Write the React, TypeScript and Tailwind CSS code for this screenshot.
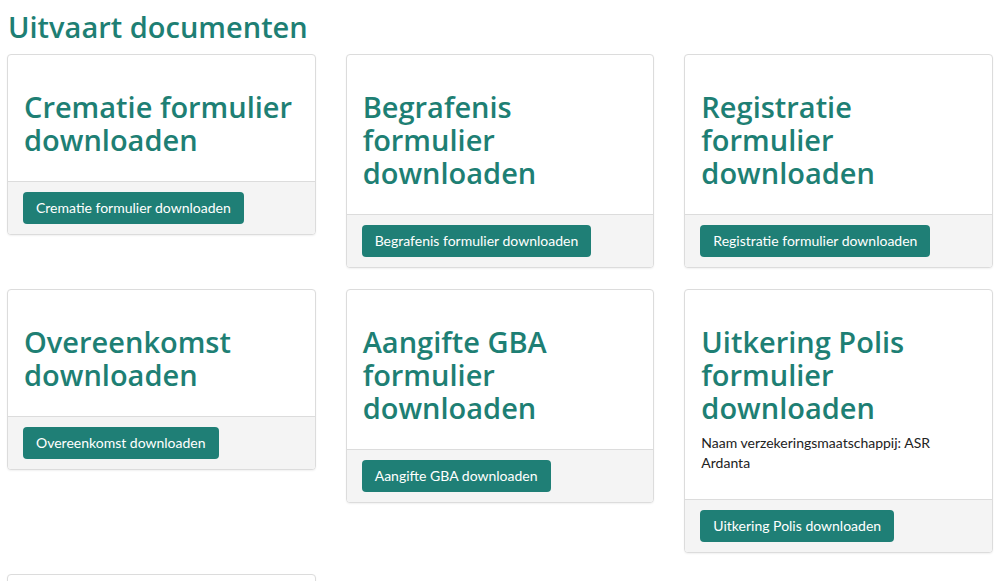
import React from 'react';

interface DocCard {
    title: string;
    button: string;
    note?: string;
}

const docs: DocCard[] = [
    { title: 'Crematie formulier downloaden', button: 'Crematie formulier downloaden' },
    { title: 'Begrafenis formulier downloaden', button: 'Begrafenis formulier downloaden' },
    { title: 'Registratie formulier downloaden', button: 'Registratie formulier downloaden' },
    { title: 'Overeenkomst downloaden', button: 'Overeenkomst downloaden' },
    { title: 'Aangifte GBA formulier downloaden', button: 'Aangifte GBA downloaden' },
    { title: 'Uitkering Polis formulier downloaden', button: 'Uitkering Polis downloaden', note: 'Naam verzekeringsmaatschappij: ASR Ardanta' },
    { title: 'Overlijdensakte downloaden', button: 'Overlijdensakte downloaden' },
];

const Card: React.FC<{ doc: DocCard }> = ({ doc }) => (
    <div className="self-start bg-white border border-[#dcdcdc] rounded-[4px] shadow-[0_1px_2px_rgba(0,0,0,0.06)] overflow-hidden">
        <div className="px-4 pt-[35px] pb-[25px]">
            <h3 className="font-['Open_Sans',sans-serif] font-semibold text-[29px] leading-[33px] text-[#1e7f74]">
                {doc.title}
            </h3>
            {doc.note && (
                <p className="mt-[9px] mb-px font-['Lato',sans-serif] text-[14px] leading-[20px] text-[#222] pr-10">{doc.note}</p>
            )}
        </div>
        <div className="bg-[#f4f4f4] border-t border-[#dcdcdc] px-[15px] py-[10px]">
            <button className="h-[32px] bg-[#1f7f76] text-white font-['Lato',sans-serif] text-[14px] leading-[20px] px-[13px] rounded-[4px]">
                {doc.button}
            </button>
        </div>
    </div>
);

export default function App() {
    return (
        <div className="bg-white min-h-screen px-[7px] pt-[9px] pb-10 w-[1005px]">
            <h1 className="font-['Open_Sans',sans-serif] font-semibold text-[29px] leading-[36px] text-[#1e7f74] pl-px mb-[9px]">
                Uitvaart documenten
            </h1>
            <div className="grid grid-cols-3 gap-x-[30px] gap-y-[21px] w-[986px] items-start">
                {docs.map((d, i) => <Card key={i} doc={d} />)}
            </div>
        </div>
    );
}
